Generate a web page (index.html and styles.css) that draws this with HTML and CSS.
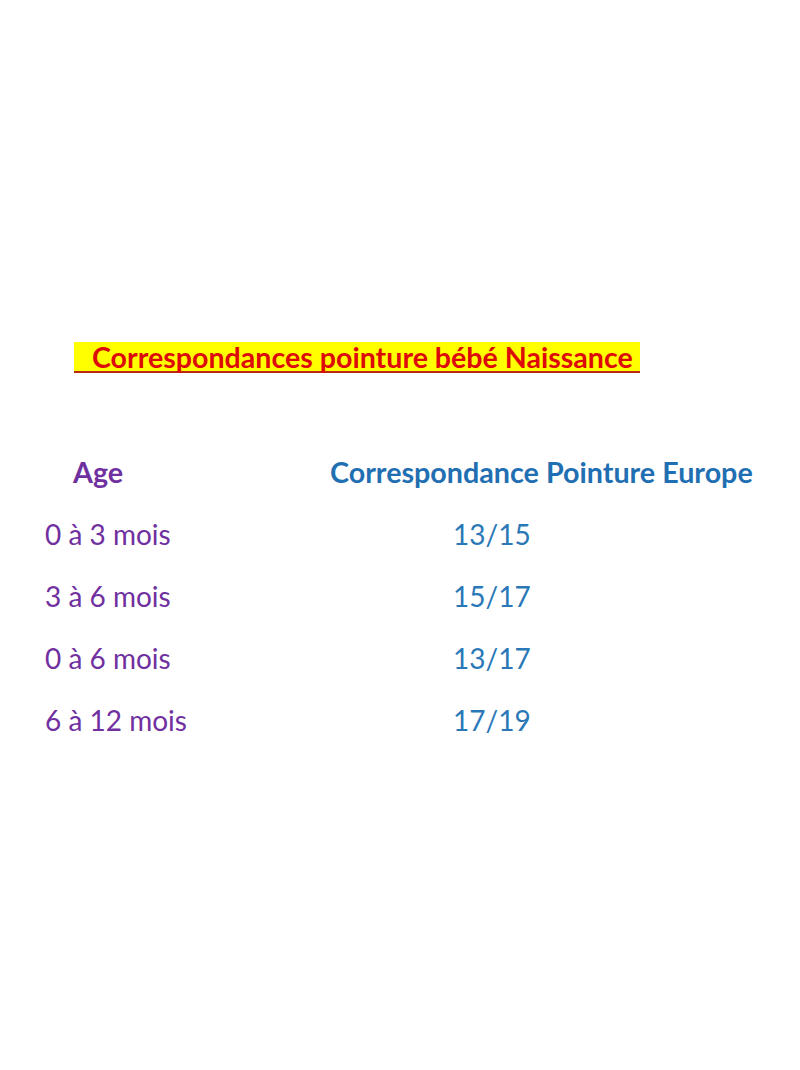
FILE: index.html
```html
<!DOCTYPE html>
<html lang="fr">
<head>
<meta charset="utf-8">
<title>Correspondances pointure bébé Naissance</title>
<link rel="stylesheet" href="styles.css">
</head>
<body>
<div class="sheet">
  <h1 class="title"><span class="title-text">Correspondances pointure bébé Naissance</span></h1>
  <div class="table">
    <div class="head age-head">Age</div>
    <div class="head size-head">Correspondance Pointure Europe</div>
    <div class="cell age">0 à 3 mois</div>
    <div class="cell size">13/15</div>
    <div class="cell age">3 à 6 mois</div>
    <div class="cell size">15/17</div>
    <div class="cell age">0 à 6 mois</div>
    <div class="cell size">13/17</div>
    <div class="cell age">6 à 12 mois</div>
    <div class="cell size">17/19</div>
  </div>
</div>
</body>
</html>
```
FILE: styles.css
```css
html, body {
  margin: 0;
  padding: 0;
  background: #ffffff;
}
body {
  width: 800px;
  height: 1070px;
  font-family: Lato, "Open Sans", "Liberation Sans", sans-serif;
}
.sheet {
  padding-top: 342px;
}
.title {
  margin: 0 0 0 74px;
  font-size: 28.6px;
  font-weight: 700;
  line-height: 31px;
  height: 31px;
}
.title-text {
  display: inline-block;
  background: #ffff00;
  color: #dd0a0a;
  padding-left: 18px;
  padding-right: 7px;
  height: 29px;
  border-bottom: 2px solid #b82a12;
}
.table {
  margin-top: 68px;
  display: grid;
  grid-template-columns: 330px 1fr;
  grid-auto-rows: 62px;
  align-items: center;
  font-size: 28px;
}
.head {
  font-weight: 700;
  font-size: 28.7px;
}
.age-head {
  padding-left: 73px;
  color: #7030a0;
}
.size-head {
  color: #1f6fb2;
}
.age {
  padding-left: 45px;
  color: #7030a0;
}
.size {
  padding-left: 123px;
  color: #2a78b8;
}
```
